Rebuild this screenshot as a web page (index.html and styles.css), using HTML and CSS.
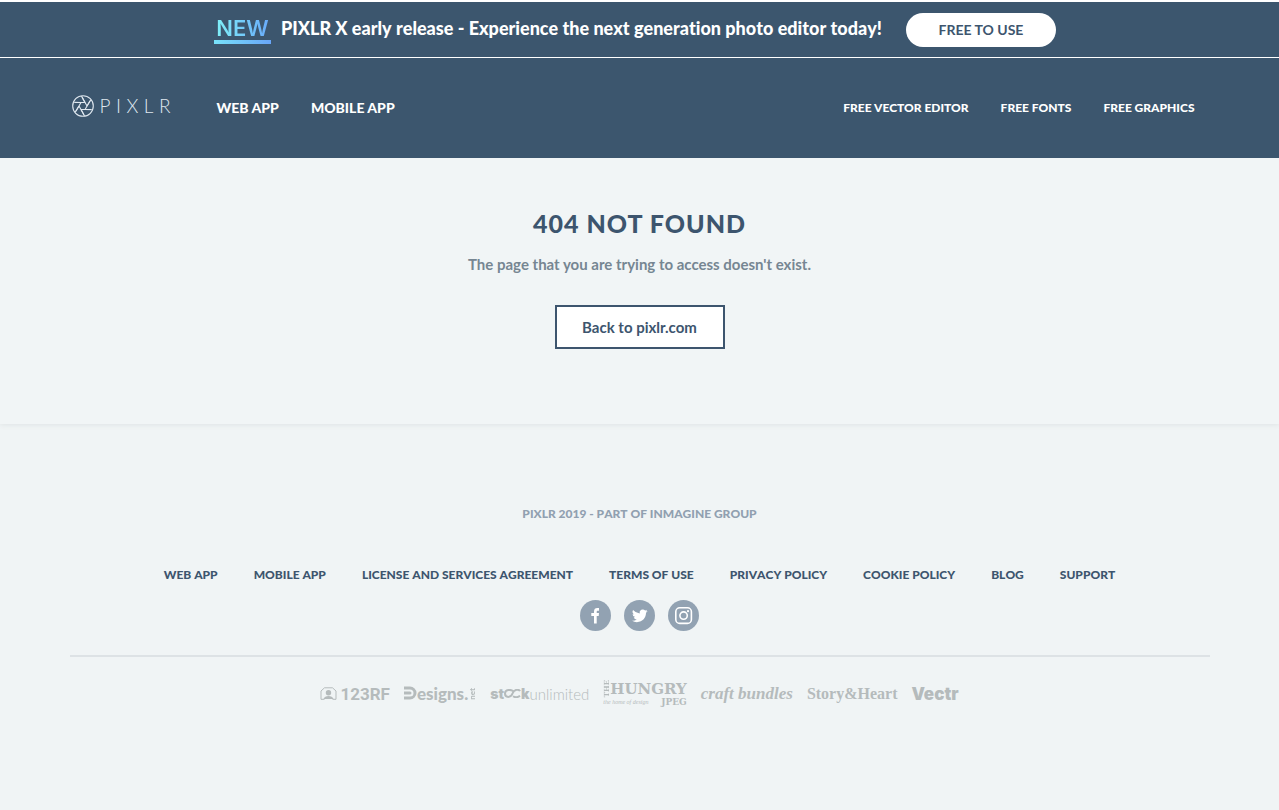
FILE: index.html
```html
<!DOCTYPE html>
<html lang="en">
<head>
<meta charset="utf-8">
<meta name="viewport" content="width=device-width, initial-scale=1">
<title>404 Not Found - Pixlr</title>
<link rel="stylesheet" href="styles.css">
</head>
<body>
<div class="promo">
  <span class="promo-new">NEW</span>
  <span class="promo-text">PIXLR X early release - Experience the next generation photo editor today!</span>
  <a class="promo-button" href="#">FREE TO USE</a>
</div>
<header class="header">
  <div class="container header-row">
    <a class="logo" href="#" aria-label="Pixlr">
      <svg class="logo-mark" viewBox="0 0 22 22" fill="none" stroke="currentColor" stroke-width="1.1">
        <circle cx="11" cy="11" r="10.3"/>
        <path id="blade" d="M9 7.500H13M13 7.500 9.500 1M13 7.500H3"/>
        <use href="#blade" transform="rotate(60 11 11)"/>
        <use href="#blade" transform="rotate(120 11 11)"/>
        <use href="#blade" transform="rotate(180 11 11)"/>
        <use href="#blade" transform="rotate(240 11 11)"/>
        <use href="#blade" transform="rotate(300 11 11)"/>
      </svg>
      <span class="logo-word"><span>P</span><span>I</span><span>X</span><span>L</span><span>R</span></span>
    </a>
    <nav class="nav-main">
      <a href="#">WEB APP</a>
      <a href="#">MOBILE APP</a>
    </nav>
    <nav class="nav-side">
      <a href="#">FREE VECTOR EDITOR</a>
      <a href="#">FREE FONTS</a>
      <a href="#">FREE GRAPHICS</a>
    </nav>
  </div>
</header>
<main class="main">
  <h1>404 NOT FOUND</h1>
  <p>The page that you are trying to access doesn't exist.</p>
  <a class="back" href="#">Back to pixlr.com</a>
</main>
<footer class="footer container">
  <p class="copyright">PIXLR 2019 - PART OF INMAGINE GROUP</p>
  <nav class="footer-links">
    <a href="#">WEB APP</a>
    <a href="#">MOBILE APP</a>
    <a href="#">LICENSE AND SERVICES AGREEMENT</a>
    <a href="#">TERMS OF USE</a>
    <a href="#">PRIVACY POLICY</a>
    <a href="#">COOKIE POLICY</a>
    <a href="#">BLOG</a>
    <a href="#">SUPPORT</a>
  </nav>
  <div class="social">
    <a href="#" aria-label="Facebook"><svg viewBox="0 0 31 31"><path fill="currentColor" d="M14 23.5v-7.600h-2.700v-2.900H14v-1.500c0-2.400 1.300-3.500 3.300-3.500h1.700v2.700h-1.200c-.8 0-1.100.4-1.100 1.100v1.200h2.300l-.3 2.900h-2v7.600z"/></svg></a>
    <a href="#" aria-label="Twitter"><svg viewBox="0 0 31 31"><path fill="currentColor" transform="translate(8 8) scale(.65)" d="M23.950 4.570a10 10 0 0 1-2.820.77 4.960 4.960 0 0 0 2.160-2.720c-.95.560-2 .96-3.120 1.180a4.920 4.920 0 0 0-8.380 4.480A13.930 13.930 0 0 1 1.640 3.160a4.920 4.920 0 0 0 1.520 6.570 4.900 4.900 0 0 1-2.230-.61v.06a4.920 4.920 0 0 0 3.950 4.830 5 5 0 0 1-2.210.08 4.940 4.940 0 0 0 4.600 3.420A9.870 9.870 0 0 1 0 19.540a13.990 13.990 0 0 0 7.550 2.210c9.050 0 14-7.500 14-13.980 0-.21 0-.42-.02-.63a9.940 9.940 0 0 0 2.460-2.550z"/></svg></a>
    <a href="#" aria-label="Instagram"><svg viewBox="0 0 31 31" fill="none" stroke="currentColor" stroke-width="1.600"><rect x="7.800" y="7.800" width="15.600" height="15.600" rx="4"/><circle cx="15.600" cy="15.600" r="3.700"/><circle cx="20" cy="11.200" r="1.100" fill="currentColor" stroke="none"/></svg></a>
  </div>
  <div class="partners">
    <a class="brand-rf" href="#">
      <svg viewBox="0 0 16 13" fill="none" stroke="currentColor" stroke-width="1"><path d="M4 12.300H.5V4L4 .8h8L15.500 4v8.300H12"/><circle cx="8" cy="5.700" r="2.700" fill="currentColor" stroke="none"/><path fill="currentColor" stroke="none" d="M3 12c1-4 9-4 10 0z"/></svg>
      <span>123RF</span>
    </a>
    <a class="brand-designs" href="#">
      <svg viewBox="0 0 13 15"><path fill="currentColor" fill-rule="evenodd" d="M0 .5h6a6.500 6.500 0 0 1 0 13H0v-3h6a3.500 3.500 0 0 0 0-7H0zM0 5.500h6a1.500 1.500 0 0 1 0 3H0z"/></svg>
      <span>esigns.</span><small>net</small>
    </a>
    <a class="brand-stock" href="#"><b>st</b><svg viewBox="0 0 17 9" fill="none" stroke="currentColor" stroke-width="2"><path d="M9 2C7 .5 1 0 1 4.500S7 9 8.500 4.500 15 0 16 2.200M9 7.200c2 1.400 5 1 7-.5"/></svg><b>k</b><span>unlimited</span></a>
    <a class="brand-hungry" href="#">
      <small class="hungry-the">THE</small>
      <span class="hungry-name">HUNGRY</span>
      <span class="hungry-sub"><i>the home of design</i><b>JPEG</b></span>
    </a>
    <a class="brand-craft" href="#">craft bundles</a>
    <a class="brand-story" href="#">Story&amp;Heart</a>
    <a class="brand-vectr" href="#">Vectr</a>
  </div>
</footer>
</body>
</html>
```
FILE: styles.css
```css
* { box-sizing: border-box; }
body {
  margin: 0;
  border-top: 2px solid #fff;
  background: #f0f4f5;
  color: #3d556e;
  font-family: Lato, sans-serif;
  font-weight: 700;
  font-variant-ligatures: none;
}
a { color: inherit; text-decoration: none; }
svg { display: block; }
h1, p { margin: 0; }
.container { max-width: 1140px; margin: 0 auto; }

.promo {
  display: flex;
  align-items: center;
  justify-content: center;
  min-height: 56px;
  padding-right: 9px;
  background: #3c566e;
  border-bottom: 1px solid #fff;
  color: #fff;
}
.promo-new {
  width: 57px;
  text-align: center;
  border-bottom: 4px solid #75b5fb;
  border-image: linear-gradient(90deg, #78e3fa, #68a4f8) 1;
  background: linear-gradient(90deg, #80f2f8, #68a8fa);
  background-clip: text;
  -webkit-background-clip: text;
  color: transparent;
  font-family: Inter, sans-serif;
  font-size: 22px;
  font-weight: 600;
  line-height: 24px;
}
.promo-text {
  margin: 0 24px 4px 10px;
  font-size: 18px;
  font-weight: 900;
  font-kerning: none;
  line-height: 24px;
}
.promo-button {
  width: 150px;
  border-radius: 17px;
  background: #fff;
  color: #3d556e;
  font-size: 14px;
  line-height: 34px;
  text-align: center;
}

.header { position: relative; background: #3c566e; color: #fff; }
.header-row { display: flex; align-items: center; min-height: 100px; }
.logo { display: flex; align-items: center; gap: 6px; margin: 0 46px 4px 2px; color: #dfe7ef; }
.logo-mark { width: 22px; height: 22px; }
.logo-word {
  display: flex;
  justify-content: space-between;
  width: 71px;
  font-size: 19px;
  font-weight: 300;
  line-height: 22px;
}
.nav-main { display: flex; gap: 32px; font-size: 14px; font-weight: 900; line-height: 20px; }
.nav-side { display: flex; gap: 32px; margin: 0 15px 0 auto; font-size: 12px; font-weight: 900; line-height: 20px; }

.main {
  display: flex;
  flex-direction: column;
  align-items: center;
  padding: 48px 16px 75px;
  background: #f1f5f6;
  box-shadow: 0 1px 5px #dfe4e5;
}
.main h1 { font-size: 25px; font-weight: 900; line-height: 34px; letter-spacing: 1px; }
.main p { margin: 14px 0 30px; color: #768692; font-size: 15px; line-height: 21px; }
.back {
  min-width: 170px;
  border: 2px solid #3d556e;
  background: #fff;
  font-size: 15px;
  line-height: 40px;
  text-align: center;
}

.footer { padding-top: 80px; text-align: center; }
.copyright { color: #91a0b0; font-size: 12px; font-weight: 900; font-kerning: none; line-height: 20px; }
.footer-links {
  display: flex;
  flex-wrap: wrap;
  justify-content: center;
  gap: 4px 36px;
  margin-top: 41px;
  font-size: 12px;
  font-weight: 900;
  font-kerning: none;
  line-height: 20px;
}
.social { display: flex; justify-content: center; gap: 13px; margin-top: 15px; }
.social a { width: 31px; height: 31px; border-radius: 50%; background: #92a2b2; color: #fff; }

.partners {
  display: flex;
  align-items: center;
  justify-content: center;
  gap: 14px;
  margin-top: 24px;
  padding-top: 23px;
  border-top: 2px solid #dde2e5;
  color: #b5bbbc;
  line-height: 26px;
}
.partners a { display: flex; align-items: center; }
.brand-rf { gap: 3px; font-family: Roboto, sans-serif; font-size: 17px; }
.brand-rf svg { width: 17px; height: 13px; }
.brand-designs { font-size: 17px; font-weight: 900; }
.brand-designs svg { width: 13px; height: 15px; }
.brand-designs small { font-size: 8px; line-height: 8px; writing-mode: vertical-rl; rotate: 180deg; }
.brand-stock { font-family: Inter, sans-serif; font-size: 14px; }
.brand-stock svg { width: 17px; height: 9px; }
.brand-stock span { font-family: Lato, sans-serif; font-size: 15px; font-weight: 300; }
.partners .brand-hungry {
  display: grid;
  grid-template-columns: 7px auto;
  font-family: "DejaVu Serif", serif;
}
.hungry-the { font-size: 7px; line-height: 7px; writing-mode: vertical-rl; rotate: 180deg; }
.hungry-name { font-size: 15px; line-height: 16px; }
.hungry-sub { display: flex; grid-column: 1 / 3; align-items: center; justify-content: space-between; line-height: 10px; }
.hungry-sub i { font: italic 6px "Liberation Serif", serif; }
.hungry-sub b { font-size: 9px; }
.partners .brand-craft { font: italic 700 17px "Liberation Serif", serif; }
.partners .brand-story { font: 700 16px "Liberation Serif", serif; }
.brand-vectr { font-family: Inter, sans-serif; font-size: 17px; font-weight: 900; }
```
